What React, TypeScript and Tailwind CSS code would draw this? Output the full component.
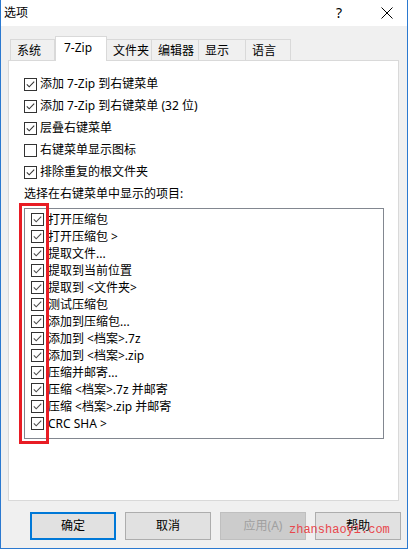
import React from 'react';

const font = { fontFamily: '"Noto Sans", "Noto Sans CJK SC", sans-serif' };

const tabs = [
  { label: '系统', w: 'w-[45px]' },
  { label: '7-Zip', w: 'w-[52px]', active: true },
  { label: '文件夹', w: 'w-[46px]' },
  { label: '编辑器', w: 'w-[48px]' },
  { label: '显示', w: 'w-[48px]' },
  { label: '语言', w: 'w-[46px]' },
];

const options = [
  { label: '添加 7-Zip 到右键菜单', checked: true },
  { label: '添加 7-Zip 到右键菜单 (32 位)', checked: true },
  { label: '层叠右键菜单', checked: true },
  { label: '右键菜单显示图标', checked: false },
  { label: '排除重复的根文件夹', checked: true },
];

const menuItems = [
  '打开压缩包',
  '打开压缩包 >',
  '提取文件...',
  '提取到当前位置',
  '提取到 <文件夹>',
  '测试压缩包',
  '添加到压缩包...',
  '添加到 <档案>.7z',
  '添加到 <档案>.zip',
  '压缩并邮寄...',
  '压缩 <档案>.7z 并邮寄',
  '压缩 <档案>.zip 并邮寄',
  'CRC SHA >',
];

const CheckBox: React.FC<{ checked: boolean; tone?: string }> = ({ checked, tone = '#333333' }) => (
  <div className="w-[13px] h-[13px] border border-[#333333] bg-white flex items-center justify-center shrink-0">
    {checked && (
      <svg width="11" height="11" viewBox="0 0 11 11">
        <path d="M1.8 5.4 L4.2 7.8 L9.2 2.6" fill="none" stroke={tone} strokeWidth="1.1" />
      </svg>
    )}
  </div>
);

const App: React.FC = () => {
  return (
    <div
      className="relative w-[408px] h-[549px] bg-[#f0f0f0] border-x border-b border-[#2b79d0] flex flex-col text-[12px] leading-[16px] text-black overflow-hidden"
      style={font}
    >
      {/* title bar */}
      <div className="h-[26px] bg-white flex items-center shrink-0">
        <span className="pl-[3px]">选项</span>
        <span className="ml-auto mr-[39px] text-[14px]">?</span>
        <svg width="12" height="12" viewBox="0 0 12 12" className="mr-[14px]">
          <path d="M0.5 0.5 L11.5 11.5 M11.5 0.5 L0.5 11.5" stroke="#000" strokeWidth="1" />
        </svg>
      </div>

      {/* tabs */}
      <div className="flex items-end h-[25px] mt-[9px] pl-[9px] relative z-10">
        {tabs.map((t) =>
          t.active ? (
            <div
              key={t.label}
              className={`${t.w} h-[25px] -mb-px bg-white border border-b-0 border-[#d9d9d9] pl-[8px] pt-[3px]`}
            >
              {t.label}
            </div>
          ) : (
            <div
              key={t.label}
              className={`${t.w} h-[21px] border border-b-0 border-[#d9d9d9] -ml-px first:ml-0 pl-[6px] pt-[3px] bg-[#f0f0f0]`}
            >
              {t.label}
            </div>
          )
        )}
      </div>

      {/* panel */}
      <div className="ml-[7px] w-[391px] h-[441px] bg-white border border-[#d9d9d9] shrink-0 pt-[12px]">
        {options.map((o) => (
          <div key={o.label} className="h-[22px] flex items-center pl-[15px]">
            <CheckBox checked={o.checked} />
            <span className="ml-[3px]">{o.label}</span>
          </div>
        ))}
        <div className="h-[22px] flex items-center pl-[15px]">选择在右键菜单中显示的项目:</div>

        <div className="mt-[3px] ml-[15px] w-[360px] h-[231px] border border-[#828790] pt-[2px]">
          {menuItems.map((m) => (
            <div key={m} className="h-[17px] flex items-center pl-[6px]">
              <CheckBox checked tone="#4d4d4d" />
              <span className="ml-[4px]">{m}</span>
            </div>
          ))}
        </div>
      </div>

      {/* buttons */}
      <div className="flex gap-[9px] pl-[29px] mt-[11px]">
        <button className="w-[86px] h-[28px] bg-[#e1e1e1] border-2 border-[#0078d7]">确定</button>
        <button className="w-[86px] h-[28px] bg-[#e1e1e1] border border-[#adadad]">取消</button>
        <button className="w-[86px] h-[28px] bg-[#cccccc] border border-[#bfbfbf] text-[#a0a0a0]">应用(A)</button>
        <button className="w-[86px] h-[28px] bg-[#e1e1e1] border border-[#adadad]">帮助</button>
      </div>

      {/* red highlight */}
      <div className="absolute left-[18px] top-[203px] w-[30px] h-[241px] border-[3px] border-[#e81c24] z-20" />

      {/* watermark */}
      <div
        className="absolute left-[288px] top-[522px] text-[12px] leading-[16px] text-[#e8474c] z-20"
        style={{ fontFamily: '"Liberation Mono", monospace' }}
      >
        zhanshaoyi.com
      </div>
    </div>
  );
};

export default App;
